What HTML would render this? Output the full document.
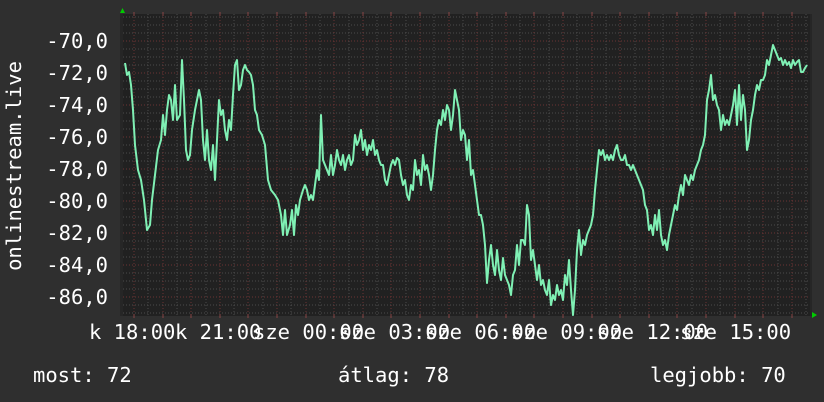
<!DOCTYPE html>
<html><head><meta charset="utf-8"><style>
html,body{margin:0;padding:0;background:#2f2f2f;}
svg{display:block}
text{font-family:"DejaVu Sans Mono","Liberation Mono",monospace;font-size:20.5px;fill:#fff}
</style></head><body>
<svg width="824" height="402" viewBox="0 0 824 402">
<rect width="824" height="402" fill="#2f2f2f"/>
<rect x="120" y="14" width="692" height="302" fill="#262626"/>
<rect x="123" y="14" width="687" height="302" fill="#212121"/>
<g id="grid"></g>
<polygon points="120,13 125,13 122.5,8" fill="#00cc00"/>
<polygon points="812,312 812,318 817,315" fill="#00cc00"/>
<polyline id="ln" fill="none" stroke="#7ff0b4" stroke-width="2" stroke-linejoin="round"/>
<g>
<text x="108" y="48" text-anchor="end">-70,0</text>
<text x="108" y="80" text-anchor="end">-72,0</text>
<text x="108" y="112" text-anchor="end">-74,0</text>
<text x="108" y="144" text-anchor="end">-76,0</text>
<text x="108" y="176" text-anchor="end">-78,0</text>
<text x="108" y="208" text-anchor="end">-80,0</text>
<text x="108" y="240" text-anchor="end">-82,0</text>
<text x="108" y="272" text-anchor="end">-84,0</text>
<text x="108" y="304" text-anchor="end">-86,0</text>
</g>
<text transform="translate(21,166) rotate(-90)" text-anchor="middle">onlinestream.live</text>
<g>
<text x="89" y="339">k 18:00</text>
<text x="175" y="339">k 21:00</text>
<text x="253" y="339">sze 00:00</text>
<text x="339" y="339">sze 03:00</text>
<text x="425" y="339">sze 06:00</text>
<text x="511" y="339">sze 09:00</text>
<text x="597" y="339">sze 12:00</text>
<text x="680" y="339">sze 15:00</text>
</g>
<text x="33" y="382">most: 72</text>
<text x="338" y="382">átlag: 78</text>
<text x="650" y="382">legjobb: 70</text>
</svg>
<script>
var g=document.getElementById('grid'),ns='http://www.w3.org/2000/svg',s='';
for(var y=17;y<316;y+=8){var maj=((y-41)%32===0);s+='<line x1="123" x2="810" y1="'+y+'" y2="'+y+'" stroke="'+(maj?'#6a3434':'#4a4a4a')+'" stroke-width="1" stroke-dasharray="1,2"/>';}
for(var i=0;;i++){var x=Math.round(134+i*14.3);if(x>810)break;var maj=i%2===0;s+='<line y1="14" y2="316" x1="'+x+'" x2="'+x+'" stroke="'+(maj?'#6a3434':'#4a4a4a')+'" stroke-width="1" stroke-dasharray="1,2"/>';
if(maj)s+='<line y1="12" y2="16" x1="'+x+'" x2="'+x+'" stroke="#884444"/><line y1="314" y2="318" x1="'+x+'" x2="'+x+'" stroke="#884444"/>';}
g.innerHTML=s;
var p=[125,63,127,75,129,72,131,85,133,110,135,145,138,170,141,180,144,200,147,230,150,225,152,200,155,175,158,150,161,140,163,115,165,135,167,110,169,95,171,100,173,120,175,85,177,120,180,115,182,60,184,100,186,150,188,160,190,155,192,130,195,110,197,100,199,90,201,100,203,140,205,160,207,130,209,160,211,170,213,145,215,180,217,140,219,100,221,115,223,110,225,130,227,140,229,120,231,130,233,95,235,65,237,60,239,90,241,85,243,70,245,65,247,70,249,72,251,75,253,85,255,110,257,115,259,130,262,135,265,145,268,180,271,190,275,195,278,200,281,215,283,235,285,210,287,235,290,225,292,210,294,235,296,205,298,215,300,200,303,190,305,185,307,190,309,200,311,195,313,200,315,185,317,170,319,180,321,115,323,160,325,165,327,170,329,175,331,155,333,175,335,165,337,150,339,160,341,165,343,155,345,170,347,160,349,155,351,165,353,160,355,135,357,145,359,140,361,130,363,150,365,140,367,155,369,145,371,150,373,140,375,155,377,150,379,160,381,165,383,165,385,180,387,185,389,175,391,165,393,160,395,165,397,158,399,160,401,175,403,185,405,180,407,195,409,200,411,185,413,190,415,160,417,175,419,170,421,185,423,155,425,170,427,165,429,175,431,190,433,175,435,150,437,130,439,120,441,125,443,110,445,120,447,105,449,110,451,130,453,115,455,90,457,100,459,110,461,140,463,130,465,135,467,160,469,140,471,175,473,170,475,185,477,200,479,215,481,215,483,225,485,245,487,283,489,260,491,245,493,265,495,275,497,250,499,270,501,280,503,258,505,275,507,280,509,285,511,295,513,275,515,270,517,245,519,265,521,240,523,240,525,245,527,205,529,215,531,260,533,250,535,265,537,280,539,265,541,285,543,280,545,290,547,295,549,280,551,305,553,295,555,300,557,285,559,295,561,290,563,300,565,275,567,285,569,260,571,290,573,317,575,290,577,250,579,230,581,255,583,240,585,245,587,235,589,230,591,225,593,215,595,190,597,170,599,150,601,155,603,150,605,160,607,155,609,160,611,155,613,160,615,150,617,145,619,155,621,160,623,160,625,155,627,165,629,165,631,170,633,165,635,170,637,175,639,180,641,185,643,190,645,205,647,210,649,230,651,225,653,235,655,215,657,230,659,210,661,235,663,245,665,240,667,250,669,235,671,225,673,215,675,205,677,210,679,195,681,185,683,195,685,175,687,180,689,185,691,175,693,180,695,170,697,165,699,160,701,150,703,145,705,135,707,100,709,90,711,75,713,100,715,95,717,105,719,110,721,130,723,115,725,125,727,120,729,125,731,115,733,105,735,90,737,125,739,85,741,120,743,95,745,110,747,150,749,140,751,120,753,110,755,95,757,85,759,90,761,80,763,80,765,75,767,60,769,65,771,55,773,45,775,50,777,55,779,60,781,58,783,65,785,60,787,65,789,62,791,68,793,60,795,65,797,62,799,60,801,72,803,72,805,68,807,65];
var q=[];for(var i=0;i<p.length;i+=2)q.push(p[i]+','+Math.min(p[i+1],315));
document.getElementById('ln').setAttribute('points',q.join(' '));
</script>
</body></html>
